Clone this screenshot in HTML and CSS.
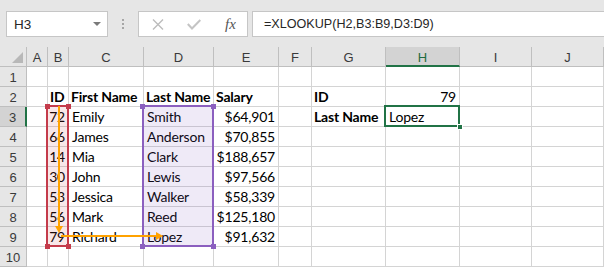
FILE: index.html
```html
<!DOCTYPE html>
<html>
<head>
  <meta charset="UTF-8">
  <title>XLOOKUP Example</title>
  <link rel="stylesheet" href="styles.css">
</head>
<body>
  <div class="app">
    <div class="toolbar">
      <div class="namebox">
        <span>H3</span>
        <span class="caret"></span>
      </div>
      <div class="grip"><i></i><i></i><i></i></div>
      <div class="fxbtns">
        <svg class="ico" width="12" height="11" viewBox="0 0 12 11">
          <path d="M1 0.5 L11 10.5 M11 0.5 L1 10.5" stroke="#bcbcbc" stroke-width="1.4" fill="none"/>
        </svg>
        <svg class="ico" width="14" height="11" viewBox="0 0 14 11">
          <path d="M0.8 5 L5 9.5 L13.3 1" stroke="#c4c4c4" stroke-width="2" fill="none"/>
        </svg>
        <span class="fx">fx</span>
      </div>
      <div class="formula">=XLOOKUP(H2,B3:B9,D3:D9)</div>
    </div>

    <div class="sheet">
      <!-- column headers -->
      <div class="hd corner"><span class="tri"></span></div>
      <div class="hd">A</div><div class="hd">B</div><div class="hd">C</div><div class="hd">D</div><div class="hd">E</div>
      <div class="hd">F</div><div class="hd">G</div><div class="hd sel-col">H</div><div class="hd">I</div><div class="hd">J</div>

      <div class="rh">1</div>
      <div class="c"></div><div class="c"></div><div class="c"></div><div class="c"></div><div class="c"></div>
      <div class="c"></div><div class="c"></div><div class="c"></div><div class="c"></div><div class="c"></div>

      <div class="rh">2</div>
      <div class="c"></div><div class="c b">ID</div><div class="c b">First Name</div><div class="c b">Last Name</div><div class="c b">Salary</div>
      <div class="c"></div><div class="c b">ID</div><div class="c r">79</div><div class="c"></div><div class="c"></div>

      <div class="rh sel-row">3</div>
      <div class="c"></div><div class="c r">72</div><div class="c">Emily</div><div class="c">Smith</div><div class="c r">$64,901</div>
      <div class="c"></div><div class="c b">Last Name</div><div class="c">Lopez</div><div class="c"></div><div class="c"></div>

      <div class="rh">4</div>
      <div class="c"></div><div class="c r">66</div><div class="c">James</div><div class="c">Anderson</div><div class="c r">$70,855</div>
      <div class="c"></div><div class="c"></div><div class="c"></div><div class="c"></div><div class="c"></div>

      <div class="rh">5</div>
      <div class="c"></div><div class="c r">14</div><div class="c">Mia</div><div class="c">Clark</div><div class="c r">$188,657</div>
      <div class="c"></div><div class="c"></div><div class="c"></div><div class="c"></div><div class="c"></div>

      <div class="rh">6</div>
      <div class="c"></div><div class="c r">30</div><div class="c">John</div><div class="c">Lewis</div><div class="c r">$97,566</div>
      <div class="c"></div><div class="c"></div><div class="c"></div><div class="c"></div><div class="c"></div>

      <div class="rh">7</div>
      <div class="c"></div><div class="c r">53</div><div class="c">Jessica</div><div class="c">Walker</div><div class="c r">$58,339</div>
      <div class="c"></div><div class="c"></div><div class="c"></div><div class="c"></div><div class="c"></div>

      <div class="rh">8</div>
      <div class="c"></div><div class="c r">56</div><div class="c">Mark</div><div class="c">Reed</div><div class="c r">$125,180</div>
      <div class="c"></div><div class="c"></div><div class="c"></div><div class="c"></div><div class="c"></div>

      <div class="rh">9</div>
      <div class="c"></div><div class="c r">79</div><div class="c">Richard</div><div class="c">Lopez</div><div class="c r">$91,632</div>
      <div class="c"></div><div class="c"></div><div class="c"></div><div class="c"></div><div class="c"></div>

      <div class="rh">10</div>
      <div class="c"></div><div class="c"></div><div class="c"></div><div class="c"></div><div class="c"></div>
      <div class="c"></div><div class="c"></div><div class="c"></div><div class="c"></div><div class="c"></div>
    </div>

    <!-- range finder boxes drawn over the grid -->
    <div class="range range-red"></div>
    <span class="knob knob-red" style="left:45px;top:104px"></span>
    <span class="knob knob-red" style="left:66px;top:104px"></span>
    <span class="knob knob-red" style="left:45px;top:244px"></span>
    <span class="knob knob-red" style="left:66px;top:244px"></span>

    <div class="range range-purple"></div>
    <span class="knob knob-purple" style="left:140px;top:104px"></span>
    <span class="knob knob-purple" style="left:211px;top:104px"></span>
    <span class="knob knob-purple" style="left:140px;top:244px"></span>
    <span class="knob knob-purple" style="left:211px;top:244px"></span>

    <div class="active-cell"></div>
    <span class="fill-handle"></span>

    <svg class="arrows" width="604" height="267" viewBox="0 0 604 267">
      <path d="M59 106 L59 228" stroke="#ffa200" stroke-width="2" fill="none"/>
      <path d="M55 226 L63 226 L59 233 Z" fill="#ffa200"/>
      <path d="M61 236 L157 236" stroke="#ffa200" stroke-width="2" fill="none"/>
      <path d="M156 232 L156 240 L163 236 Z" fill="#ffa200"/>
    </svg>
  </div>
</body>
</html>
```

FILE: styles.css
```css
* {
  box-sizing: border-box;
}
body {
  margin: 0;
  background: #fff;
}
.app {
  position: relative;
  width: 604px;
  height: 267px;
  overflow: hidden;
}

/* formula bar */
.toolbar {
  height: 47px;
  background: #e6e6e6;
  display: flex;
  align-items: flex-start;
  padding: 11px 0 0 6px;
  font-family: "Liberation Sans", Arial, sans-serif;
  font-size: 13.5px;
  color: #262626;
}
.namebox {
  width: 102px;
  height: 26px;
  background: #fff;
  border: 1px solid #c6c6c6;
  display: flex;
  align-items: center;
  justify-content: space-between;
  padding: 0 6px 0 7px;
}
.caret {
  width: 0;
  height: 0;
  border-left: 4px solid transparent;
  border-right: 4px solid transparent;
  border-top: 4px solid #7a7a7a;
}
.grip {
  width: 30px;
  display: flex;
  flex-direction: column;
  align-items: center;
  gap: 2px;
  padding-top: 8px;
}
.grip i {
  width: 2px;
  height: 2px;
  background: #a6a6a6;
}
.fxbtns {
  width: 110px;
  height: 26px;
  background: #fff;
  border: 1px solid #c6c6c6;
  display: flex;
  align-items: center;
  padding-left: 13px;
  gap: 23px;
}
.fx {
  font-family: "Liberation Serif", serif;
  font-style: italic;
  font-size: 15px;
  color: #555;
  margin-left: 1px;
}
.formula {
  flex: 1;
  height: 26px;
  margin-left: 4px;
  background: #fff;
  border: 1px solid #c6c6c6;
  border-right: none;
  padding: 0 0 0 11px;
  font-size: 12.6px;
  line-height: 24px;
}

/* sheet grid */
.sheet {
  display: grid;
  grid-template-columns: 27px 21px 21px 75px 70px 65px 33px 74px 74px 72px 72px;
  grid-auto-rows: 20px;
}
.hd, .rh {
  background: #e6e6e6;
  border-right: 1px solid #bfbfbf;
  border-bottom: 1px solid #bfbfbf;
  font-family: "Liberation Sans", Arial, sans-serif;
  font-size: 13px;
  color: #3a3a3a;
  display: flex;
  align-items: center;
  justify-content: center;
  padding-top: 1px;
}
.corner {
  position: relative;
}
.tri {
  position: absolute;
  right: 3px;
  bottom: 3px;
  width: 0;
  height: 0;
  border-left: 11px solid transparent;
  border-bottom: 11px solid #b8b8b8;
}
.sel-col {
  background: #d3d3d3;
  color: #1f6b41;
  border-bottom: 2px solid #217346;
  padding-top: 2px;
}
.sel-row {
  background: #d3d3d3;
  border-right: 2px solid #217346;
}
.c {
  border-right: 1px solid #d4d4d4;
  border-bottom: 1px solid #d4d4d4;
  font-family: Lato, "Liberation Sans", sans-serif;
  font-size: 14px;
  letter-spacing: -0.2px;
  color: #000;
  white-space: nowrap;
  display: flex;
  align-items: flex-end;
  padding: 0 3px 1px 3px;
  line-height: 17px;
}
.b {
  font-weight: bold;
  padding-left: 2px;
}
.r {
  justify-content: flex-end;
}

/* overlays */
.range {
  position: absolute;
  top: 105px;
  height: 142px;
  border: 2px solid;
}
.range-red {
  left: 46px;
  width: 23px;
  border-color: #c43b4b;
  background: rgba(200, 70, 80, 0.13);
}
.range-purple {
  left: 142px;
  width: 72px;
  border-color: #8b5fbf;
  background: rgba(130, 95, 190, 0.13);
}
.knob {
  position: absolute;
  width: 5px;
  height: 5px;
}
.knob-red {
  background: #c43b4b;
}
.knob-purple {
  background: #8b5fbf;
}
.active-cell {
  position: absolute;
  left: 384px;
  top: 105px;
  width: 76px;
  height: 22px;
  border: 2px solid #217346;
}
.fill-handle {
  position: absolute;
  left: 457px;
  top: 124px;
  width: 6px;
  height: 6px;
  background: #217346;
  border: 1px solid #fff;
}
.arrows {
  position: absolute;
  left: 0;
  top: 0;
  pointer-events: none;
}
```
